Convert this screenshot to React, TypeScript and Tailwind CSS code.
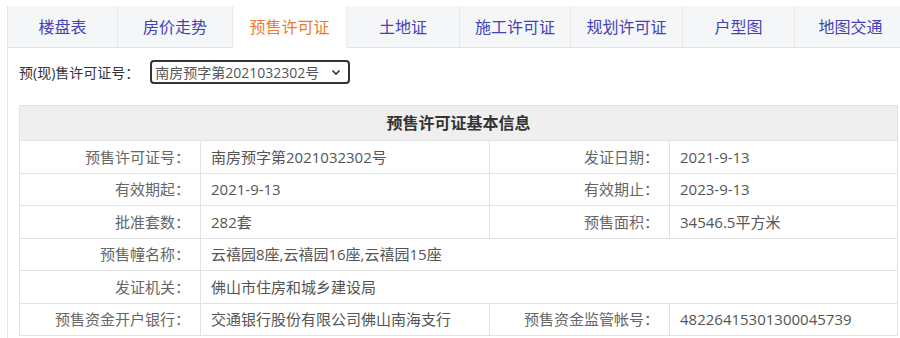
import React from 'react';

const tabs = [
  { name: '楼盘表', w: 'w-[110px]' },
  { name: '房价走势', w: 'w-[115px]' },
  { name: '预售许可证', w: 'w-[114px]', active: true },
  { name: '土地证', w: 'w-[113px]' },
  { name: '施工许可证', w: 'w-[111px]' },
  { name: '规划许可证', w: 'w-[112px]' },
  { name: '户型图', w: 'w-[112px]' },
  { name: '地图交通', w: 'w-[112px]' },
];

const Label: React.FC<{ children: React.ReactNode }> = ({ children }) => (
  <td className="border border-[#e2e2e2] px-[10px] text-right text-[#666]">{children}</td>
);

const Value: React.FC<{ children: React.ReactNode; span?: number }> = ({ children, span }) => (
  <td colSpan={span} className="border border-[#e2e2e2] pl-[10px] pr-[6px] text-left text-[#555]">
    {children}
  </td>
);

export default function App() {
  return (
    <div className="w-[900px] h-[338px] overflow-hidden bg-white pt-[6px] pl-[7px] font-['Open_Sans','Noto_Sans_CJK_SC',sans-serif]">
      <div className="h-full border-l border-[#e6e6e6]">
        {/* Tabs */}
        <div className="flex h-[42px] bg-[#f5f6f8]">
          {tabs.map((t) => (
            <div
              key={t.name}
              className={
                t.active
                  ? `${t.w} shrink-0 flex items-center justify-center bg-white border-r border-[#ececec] text-[16px] text-[#f07a2b]`
                  : `${t.w} shrink-0 flex items-center justify-center border-r border-b border-[#e8e8e8] border-b-[#e2e2e2] text-[16px] text-[#4242b6]`
              }
            >
              {t.name}
            </div>
          ))}
          <div className="flex-1 border-b border-[#e2e2e2]" />
        </div>

        {/* Permit select */}
        <div className="flex items-center pl-[11px] mt-[12px] h-[24px] text-[14px] text-[#333]">
          <span>预(现)售许可证号：</span>
          <div className="ml-[11px] flex items-center w-[200px] h-[24px] border-2 border-[#333] rounded-[4px] pl-[3px] pr-[7px] text-[#555]">
            <span className="flex-1">南房预字第2021032302号</span>
            <svg width="10" height="10" viewBox="0 0 10 10" className="text-[#333]">
              <path d="M1.5 3.5 L5 7 L8.5 3.5" fill="none" stroke="currentColor" strokeWidth="1.6" />
            </svg>
          </div>
        </div>

        {/* Info table */}
        <div className="mt-[21px] pl-[11px]">
          <table className="w-[878px] table-fixed border-collapse text-[15px]">
            <colgroup>
              <col className="w-[181px]" />
              <col className="w-[289px]" />
              <col className="w-[180px]" />
              <col className="w-[228px]" />
            </colgroup>
            <tbody>
              <tr className="h-[35px]">
                <td colSpan={4} className="border border-[#e2e2e2] bg-[#efefef] text-center font-bold text-[16px] text-[#333]">
                  预售许可证基本信息
                </td>
              </tr>
              <tr className="h-[33px]">
                <Label>预售许可证号：</Label>
                <Value>南房预字第2021032302号</Value>
                <Label>发证日期：</Label>
                <Value>2021-9-13</Value>
              </tr>
              <tr className="h-[32px]">
                <Label>有效期起：</Label>
                <Value>2021-9-13</Value>
                <Label>有效期止：</Label>
                <Value>2023-9-13</Value>
              </tr>
              <tr className="h-[33px]">
                <Label>批准套数：</Label>
                <Value>282套</Value>
                <Label>预售面积：</Label>
                <Value>34546.5平方米</Value>
              </tr>
              <tr className="h-[32px]">
                <Label>预售幢名称：</Label>
                <Value span={3}>云禧园8座,云禧园16座,云禧园15座</Value>
              </tr>
              <tr className="h-[33px]">
                <Label>发证机关：</Label>
                <Value span={3}>佛山市住房和城乡建设局</Value>
              </tr>
              <tr className="h-[32px]">
                <Label>预售资金开户银行：</Label>
                <Value>交通银行股份有限公司佛山南海支行</Value>
                <Label>预售资金监管帐号：</Label>
                <Value>48226415301300045739</Value>
              </tr>
            </tbody>
          </table>
        </div>
      </div>
    </div>
  );
}
